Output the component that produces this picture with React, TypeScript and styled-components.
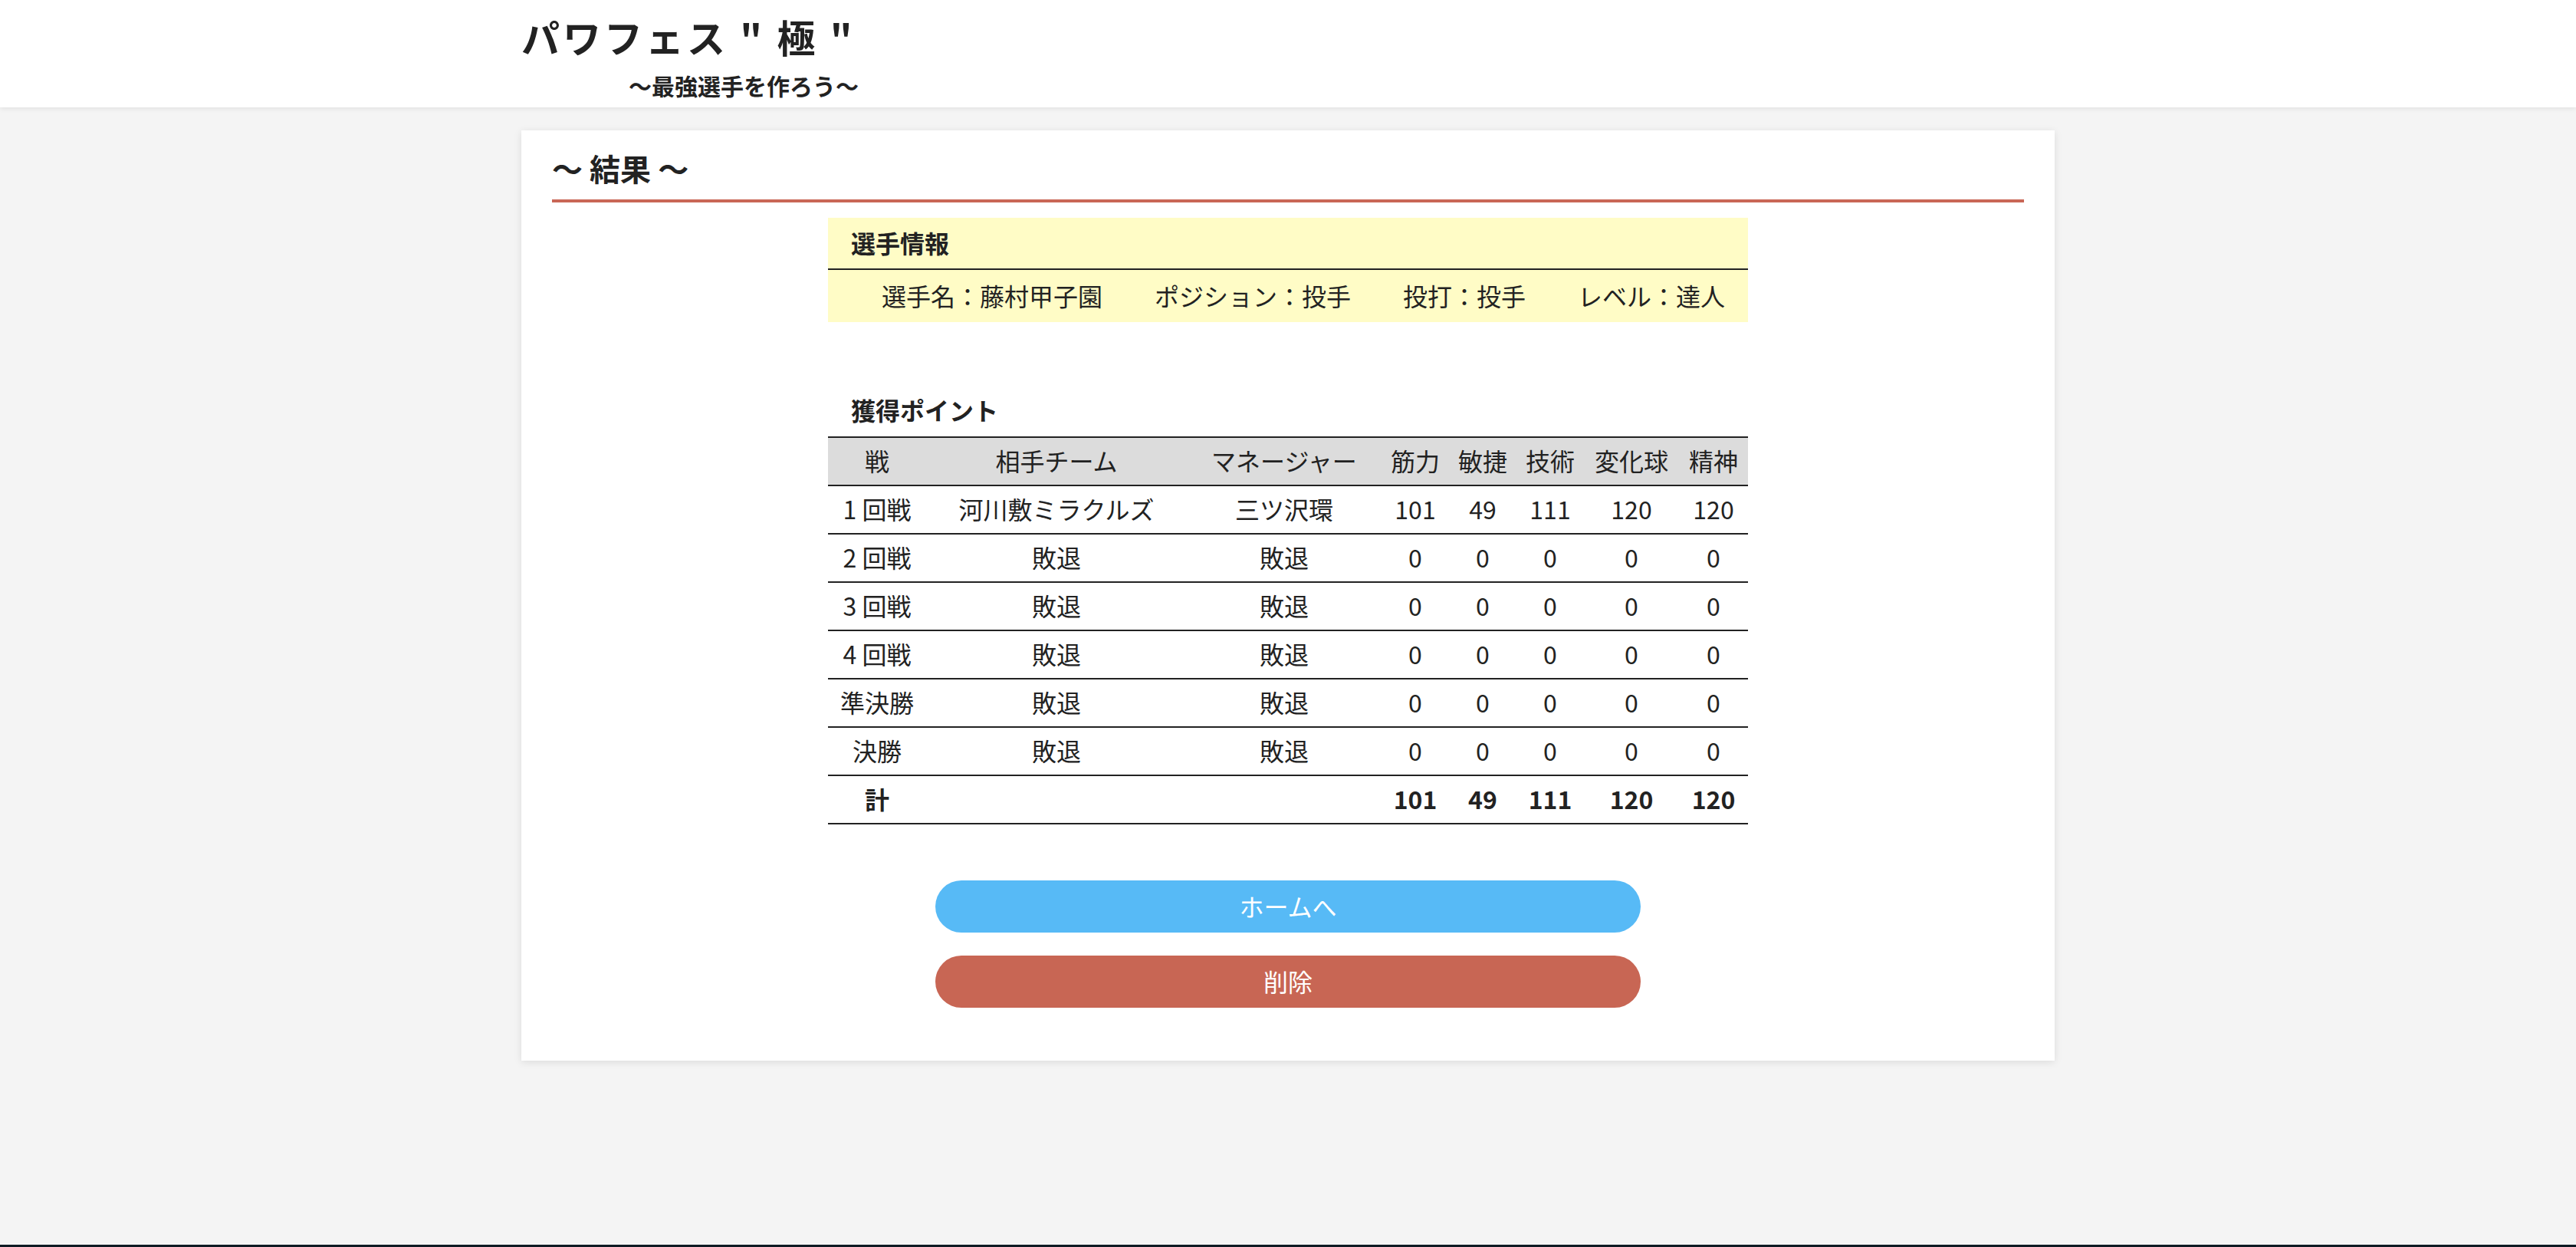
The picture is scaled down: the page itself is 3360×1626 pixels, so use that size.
import React from 'react';
import styled, { createGlobalStyle } from 'styled-components';

const GlobalStyle = createGlobalStyle`
    body {
        margin: 0;
        background: #f4f4f4;
        color: #222;
        font-family: 'Noto Sans CJK JP', 'Noto Sans', sans-serif;
    }
`;

const Wrapper = styled.div`
    display: flex;
    flex-direction: column;
    min-height: calc(100vh - 3px);
`;

const Header = styled.header`
    height: 140px;
    background: #fff;
    box-shadow: 0 2px 6px rgba(0, 0, 0, 0.08);
    position: relative;
    z-index: 1;
`;

const HeaderInner = styled.div`
    width: 2000px;
    margin: 0 auto;
    padding-top: 17px;
    box-sizing: border-box;
`;

const Title = styled.h1`
    margin: 0;
    font-size: 50px;
    line-height: 60px;
    font-weight: 700;
    letter-spacing: 4px;
`;

const SubTitle = styled.p`
    margin: 14px 0 0 140px;
    font-size: 30px;
    line-height: 40px;
    font-weight: 700;
`;

const Main = styled.main`
    flex: 1;
    padding-top: 30px;
`;

const Card = styled.section`
    width: 2000px;
    margin: 0 auto;
    padding: 20px 40px 69px;
    box-sizing: border-box;
    background: #fff;
    box-shadow: 0 2px 10px rgba(0, 0, 0, 0.1);
`;

const SectionTitle = styled.h2`
    margin: 0;
    padding-bottom: 12px;
    font-size: 40px;
    line-height: 58px;
    font-weight: 700;
    border-bottom: 4px solid #c96756;
`;

const Content = styled.div`
    width: 1200px;
    margin: 20px auto 0;
`;

const InfoBox = styled.div`
    background: #fffcc6;
`;

const InfoHeading = styled.div`
    height: 68px;
    box-sizing: border-box;
    display: flex;
    align-items: center;
    padding: 0 0 3px 30px;
    font-size: 32px;
    font-weight: 700;
    border-bottom: 2px solid #222;
`;

const InfoRow = styled.div`
    height: 68px;
    box-sizing: border-box;
    display: flex;
    align-items: center;
    justify-content: flex-end;
    gap: 68px;
    padding: 0 30px 3px 0;
    font-size: 32px;
`;

const PointsTitle = styled.div`
    height: 68px;
    box-sizing: border-box;
    margin-top: 81px;
    display: flex;
    align-items: center;
    padding: 0 0 3px 30px;
    font-size: 32px;
    font-weight: 700;
`;

const Table = styled.table`
    width: 100%;
    border-collapse: collapse;
    font-size: 32px;
`;

const Col = styled.col<{ $w: number }>`
    width: ${(p) => p.$w}px;
`;

const Th = styled.th`
    height: 58px;
    padding: 0 2px 3px;
    background: #dcdcdc;
    font-weight: 400;
    border-top: 2px solid #222;
    border-bottom: 2px solid #222;
    white-space: nowrap;
`;

const Td = styled.td<{ $bold?: boolean }>`
    height: 58px;
    padding: 0 2px 3px;
    text-align: center;
    font-weight: ${(p) => (p.$bold ? 700 : 400)};
    border-bottom: 2px solid #222;
    white-space: nowrap;
`;

const Buttons = styled.div`
    display: flex;
    flex-direction: column;
    align-items: center;
    gap: 30px;
    margin-top: 73px;
`;

const Button = styled.button<{ $color: string }>`
    width: 920px;
    height: 68px;
    padding: 0 0 3px;
    border: none;
    border-radius: 34px;
    background: ${(p) => p.$color};
    color: #fff;
    font-family: inherit;
    font-size: 32px;
    cursor: pointer;
`;

const Footer = styled.footer`
    height: 80px;
    background: #0f1b23;
`;

const colWidths = [128, 340, 254, 88, 88, 88, 124, 90];
const headers = ['戦', '相手チーム', 'マネージャー', '筋力', '敏捷', '技術', '変化球', '精神'];

const rows = [
    ['1 回戦', '河川敷ミラクルズ', '三ツ沢環', '101', '49', '111', '120', '120'],
    ['2 回戦', '敗退', '敗退', '0', '0', '0', '0', '0'],
    ['3 回戦', '敗退', '敗退', '0', '0', '0', '0', '0'],
    ['4 回戦', '敗退', '敗退', '0', '0', '0', '0', '0'],
    ['準決勝', '敗退', '敗退', '0', '0', '0', '0', '0'],
    ['決勝', '敗退', '敗退', '0', '0', '0', '0', '0'],
];

const totals = ['計', '', '', '101', '49', '111', '120', '120'];

const App = () => (
    <>
        <GlobalStyle />
        <Wrapper>
            <Header>
                <HeaderInner>
                    <Title>パワフェス " 極 "</Title>
                    <SubTitle>〜最強選手を作ろう〜</SubTitle>
                </HeaderInner>
            </Header>
            <Main>
                <Card>
                    <SectionTitle>〜 結果 〜</SectionTitle>
                    <Content>
                        <InfoBox>
                            <InfoHeading>選手情報</InfoHeading>
                            <InfoRow>
                                <span>選手名：藤村甲子園</span>
                                <span>ポジション：投手</span>
                                <span>投打：投手</span>
                                <span>レベル：達人</span>
                            </InfoRow>
                        </InfoBox>

                        <PointsTitle>獲得ポイント</PointsTitle>
                        <Table>
                            <colgroup>
                                {colWidths.map((w, i) => (
                                    <Col key={i} $w={w} />
                                ))}
                            </colgroup>
                            <thead>
                                <tr>
                                    {headers.map((h) => (
                                        <Th key={h}>{h}</Th>
                                    ))}
                                </tr>
                            </thead>
                            <tbody>
                                {rows.map((r) => (
                                    <tr key={r[0]}>
                                        {r.map((c, i) => (
                                            <Td key={i}>{c}</Td>
                                        ))}
                                    </tr>
                                ))}
                                <tr>
                                    {totals.map((c, i) => (
                                        <Td key={i} $bold>
                                            {c}
                                        </Td>
                                    ))}
                                </tr>
                            </tbody>
                        </Table>
                    </Content>
                    <Buttons>
                        <Button $color="#57baf6">ホームへ</Button>
                        <Button $color="#c86654">削除</Button>
                    </Buttons>
                </Card>
            </Main>
        </Wrapper>
        <Footer />
    </>
);

export default App;
